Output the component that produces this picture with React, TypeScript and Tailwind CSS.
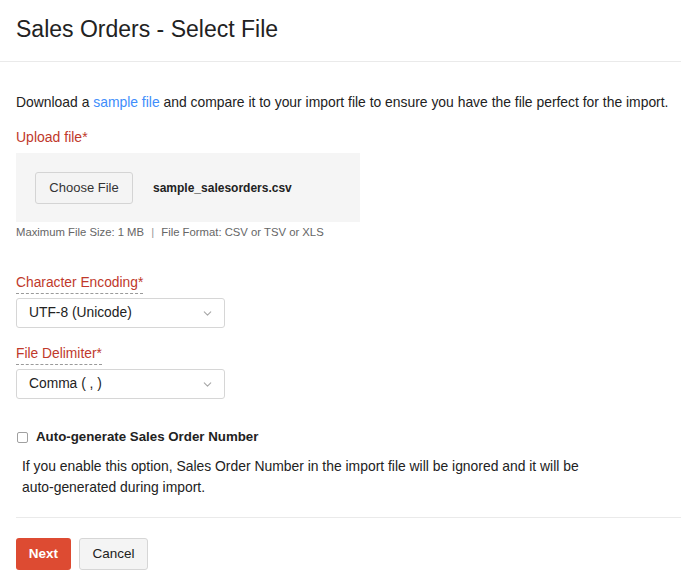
import { ChevronDown } from "lucide-react";

const font = { fontFamily: '"Liberation Sans", Arial, sans-serif' };

function Label({ text }: { text: string }) {
  return (
    <div className="mb-[4px] w-fit border-b border-dashed border-[#9a9a9a] pb-[1px] text-[13.8px] leading-[18px] text-[#c0392b]">
      {text}*
    </div>
  );
}

function Select({ value }: { value: string }) {
  return (
    <div className="flex h-[30px] w-[209px] items-center justify-between rounded-[3px] border border-[#d6d6d6] bg-white pl-[12px] pr-[10px] text-[13.8px] text-[#222]">
      <span>{value}</span>
      <ChevronDown className="h-[13px] w-[13px] text-[#a8a8a8]" strokeWidth={2} />
    </div>
  );
}

export default function App() {
  return (
    <div className="min-h-[582px] w-[681px] bg-white text-[#222]" style={font}>
      <div className="border-b border-[#eaeaea] px-[16px] pb-[17px] pt-[15px]">
        <h1 className="text-[23px] leading-[29px] text-[#222]">Sales Orders - Select File</h1>
      </div>

      <div className="pl-[16px] pr-[8px]">
        <p className="mt-[31px] text-[13.9px] leading-[18px]">
          Download a <span className="text-[#408dfb]">sample file</span> and compare it to your import file to ensure you have the file perfect for the import.
        </p>

        <div className="mt-[17px] text-[14px] leading-[18px] text-[#c0392b]">Upload file*</div>
        <div className="mt-[7px] flex h-[69px] w-[344px] items-center bg-[#f5f5f5] pl-[19px]">
          <button className="h-[32px] w-[98px] rounded-[3px] border border-[#d4d4d4] bg-[#f4f4f4] text-[13px] text-[#333]">
            Choose File
          </button>
          <span className="ml-[20px] text-[12px] font-bold text-[#222]">sample_salesorders.csv</span>
        </div>
        <div className="mt-[3px] text-[11.3px] leading-[15px] text-[#666]">
          Maximum File Size: 1 MB <span className="mx-[4px] text-[#999]">|</span> File Format: CSV or TSV or XLS
        </div>

        <div className="mt-[34px]">
          <Label text="Character Encoding" />
          <Select value="UTF-8 (Unicode)" />
        </div>
        <div className="mt-[17px]">
          <Label text="File Delimiter" />
          <Select value="Comma ( , )" />
        </div>

        <label className="mt-[29px] flex h-[18px] items-center gap-[8px]">
          <span className="ml-[1px] h-[11px] w-[11px] rounded-[2px] border border-[#a0a0a0] bg-white" />
          <span className="text-[13.3px] font-bold text-[#222]">Auto-generate Sales Order Number</span>
        </label>
        <p className="mt-[10px] pl-[6px] text-[13.9px] leading-[21px] text-[#222]">
          If you enable this option, Sales Order Number in the import file will be ignored and it will be
          <br />
          auto-generated during import.
        </p>
      </div>

      <div className="ml-[16px] mt-[19px] border-t border-[#eaeaea]" />

      <div className="flex gap-[8px] px-[16px] pt-[20px]">
        <button className="h-[32px] w-[55px] rounded-[3px] bg-[#dd4b32] text-[13.5px] font-bold text-white">Next</button>
        <button className="h-[32px] w-[69px] rounded-[3px] border border-[#d6d6d6] bg-[#f4f4f4] text-[13.5px] text-[#222]">
          Cancel
        </button>
      </div>
    </div>
  );
}
